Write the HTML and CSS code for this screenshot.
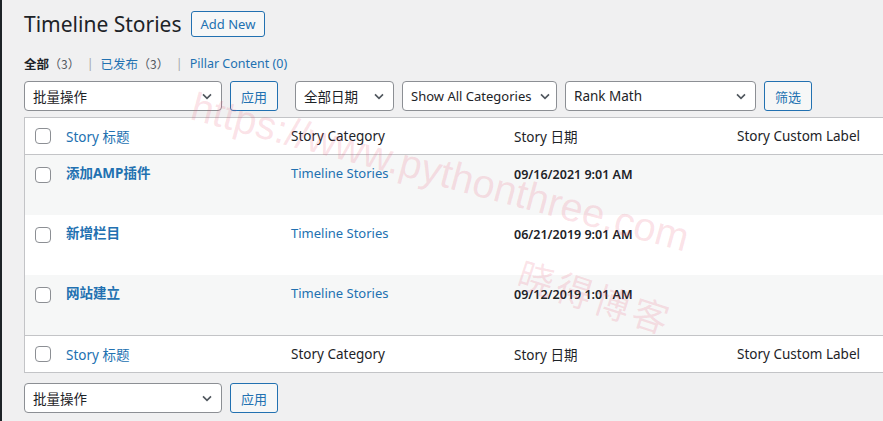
FILE: index.html
```html
<!DOCTYPE html>
<html lang="zh-CN">
<head>
    <meta charset="UTF-8">
    <title>Timeline Stories</title>
    <link rel="stylesheet" href="styles.css">
</head>
<body>
    <div class="admin-edge"></div>
    <div class="wrap">
        <div class="page-head">
            <h1>Timeline Stories</h1>
            <a href="#" class="page-title-action">Add New</a>
        </div>

        <ul class="subsubsub">
            <li><b>全部</b><span class="count">（3）</span></li>
            <li class="sep">|</li>
            <li><a href="#">已发布</a><span class="count">（3）</span></li>
            <li class="sep">|</li>
            <li><a href="#">Pillar Content (0)</a></li>
        </ul>

        <div class="tablenav">
            <div class="select w-bulk">批量操作<svg viewBox="0 0 20 20"><path d="M5 8l5 5 5-5"/></svg></div>
            <button class="btn">应用</button>
            <div class="spacer"></div>
            <div class="select w-date">全部日期<svg viewBox="0 0 20 20"><path d="M5 8l5 5 5-5"/></svg></div>
            <div class="select w-cat">Show All Categories<svg viewBox="0 0 20 20"><path d="M5 8l5 5 5-5"/></svg></div>
            <div class="select w-rank">Rank Math<svg viewBox="0 0 20 20"><path d="M5 8l5 5 5-5"/></svg></div>
            <button class="btn">筛选</button>
        </div>

        <div class="list-table">
            <div class="row head">
                <span class="cb"></span>
                <a href="#" class="col-link">Story 标题</a>
                <span>Story Category</span>
                <span>Story 日期</span>
                <span>Story Custom Label</span>
            </div>
            <div class="row alt">
                <span class="cb"></span>
                <a href="#" class="row-title">添加AMP插件</a>
                <a href="#" class="cat">Timeline Stories</a>
                <span class="date">09/16/2021 9:01 AM</span>
                <span></span>
            </div>
            <div class="row">
                <span class="cb"></span>
                <a href="#" class="row-title">新增栏目</a>
                <a href="#" class="cat">Timeline Stories</a>
                <span class="date">06/21/2019 9:01 AM</span>
                <span></span>
            </div>
            <div class="row alt">
                <span class="cb"></span>
                <a href="#" class="row-title">网站建立</a>
                <a href="#" class="cat">Timeline Stories</a>
                <span class="date">09/12/2019 1:01 AM</span>
                <span></span>
            </div>
            <div class="row head foot">
                <span class="cb"></span>
                <a href="#" class="col-link">Story 标题</a>
                <span>Story Category</span>
                <span>Story 日期</span>
                <span>Story Custom Label</span>
            </div>
        </div>

        <div class="tablenav bottom">
            <div class="select w-bulk">批量操作<svg viewBox="0 0 20 20"><path d="M5 8l5 5 5-5"/></svg></div>
            <button class="btn">应用</button>
        </div>
    </div>

    <div class="watermark">
        <span class="wm-url">https://www.pythonthree.com</span>
        <span class="wm-name">晓得博客</span>
    </div>
</body>
</html>
```

FILE: styles.css
```css
body {
    margin: 0;
    background: #f0f0f1;
    color: #1d2327;
    font-family: "Noto Sans", "Noto Sans CJK SC", sans-serif;
    font-size: 13px;
    overflow: hidden;
    height: 421px;
    position: relative;
}
a {
    color: #2271b1;
    text-decoration: none;
}
.admin-edge {
    position: absolute;
    left: 0;
    top: 0;
    bottom: 0;
    width: 2px;
    background: #1d2327;
}
.wrap {
    padding-left: 24px;
    width: 900px;
}
.page-head {
    display: flex;
    align-items: center;
    gap: 9px;
    padding-top: 10px;
    height: 28px;
}
h1 {
    margin: 0;
    font-size: 21px;
    font-weight: 400;
    line-height: 28px;
}
.page-title-action {
    border: 1px solid #2271b1;
    border-radius: 3px;
    background: #f6f7f7;
    padding: 0 9px;
    height: 24px;
    line-height: 24px;
    font-size: 13px;
}
.subsubsub {
    list-style: none;
    margin: 0;
    padding: 0;
    display: flex;
    gap: 7px;
    margin-top: 16px;
    height: 20px;
    line-height: 20px;
    font-size: 12.5px;
}
.subsubsub b {
    color: #1d2327;
}
.count {
    color: #50575e;
    font-family: "Noto Sans CJK SC", sans-serif;
    font-size: 12px;
}
.sep {
    color: #a7aaad;
}
.tablenav {
    display: flex;
    align-items: center;
    gap: 8px;
    margin-top: 7px;
    height: 30px;
}
.spacer {
    width: 1px;
}
.select {
    flex-shrink: 0;
    box-sizing: border-box;
    height: 30px;
    border: 1px solid #8c8f94;
    border-radius: 4px;
    background: #fff;
    display: flex;
    align-items: center;
    justify-content: space-between;
    padding: 0 6px 0 8px;
    font-size: 13.5px;
    white-space: nowrap;
}
.select svg {
    width: 16px;
    height: 16px;
    flex-shrink: 0;
    fill: none;
    stroke: #50575e;
    stroke-width: 2;
}
.w-bulk { width: 198px; }
.w-date { width: 99px; }
.w-cat { width: 155px; padding-right: 3px; font-size: 13px; }
.w-rank { width: 191px; }
.btn {
    height: 30px;
    border: 1px solid #2271b1;
    border-radius: 3px;
    background: #f6f7f7;
    color: #2271b1;
    font-family: inherit;
    font-size: 13px;
    padding: 0 10px;
}
.list-table {
    margin-top: 6px;
    border: 1px solid #c3c4c7;
    background: #fff;
}
.row {
    display: grid;
    grid-template-columns: 41px 225px 223px 223px 1fr;
    height: 60px;
    padding-top: 10px;
    box-sizing: border-box;
    font-size: 13px;
}
.row .cb {
    margin-left: 10px;
    margin-top: 2px;
}
.row.alt {
    background: #f6f7f7;
}
.row.head {
    height: 37px;
    padding-top: 0;
    align-items: center;
    font-size: 13.5px;
    border-bottom: 1px solid #c3c4c7;
}
.row.head .cb {
    margin-top: 0;
}
.row.foot {
    border-bottom: 0;
    border-top: 1px solid #c3c4c7;
}
.cb {
    width: 14px;
    height: 14px;
    border: 1px solid #8c8f94;
    border-radius: 4px;
    background: #fff;
    display: block;
}
.row-title {
    font-weight: 700;
    font-size: 13.5px;
    line-height: 16px;
}
.cat {
    line-height: 16px;
}
.date {
    font-weight: 600;
    font-size: 12.5px;
    line-height: 16px;
    padding-top: 2px;
}
.tablenav.bottom {
    margin-top: 10px;
}
.watermark {
    position: absolute;
    left: 0;
    top: 0;
    pointer-events: none;
    color: rgba(230, 80, 110, 0.17);
    font-family: "Liberation Sans", "Noto Sans CJK SC", sans-serif;
}
.wm-url {
    position: absolute;
    left: 198px;
    top: 84px;
    font-size: 40px;
    white-space: nowrap;
    transform: rotate(15deg);
    transform-origin: left top;
}
.wm-name {
    position: absolute;
    left: 528px;
    top: 246px;
    font-size: 36px;
    letter-spacing: 4px;
    white-space: nowrap;
    transform: rotate(18deg);
    transform-origin: left top;
}
```
